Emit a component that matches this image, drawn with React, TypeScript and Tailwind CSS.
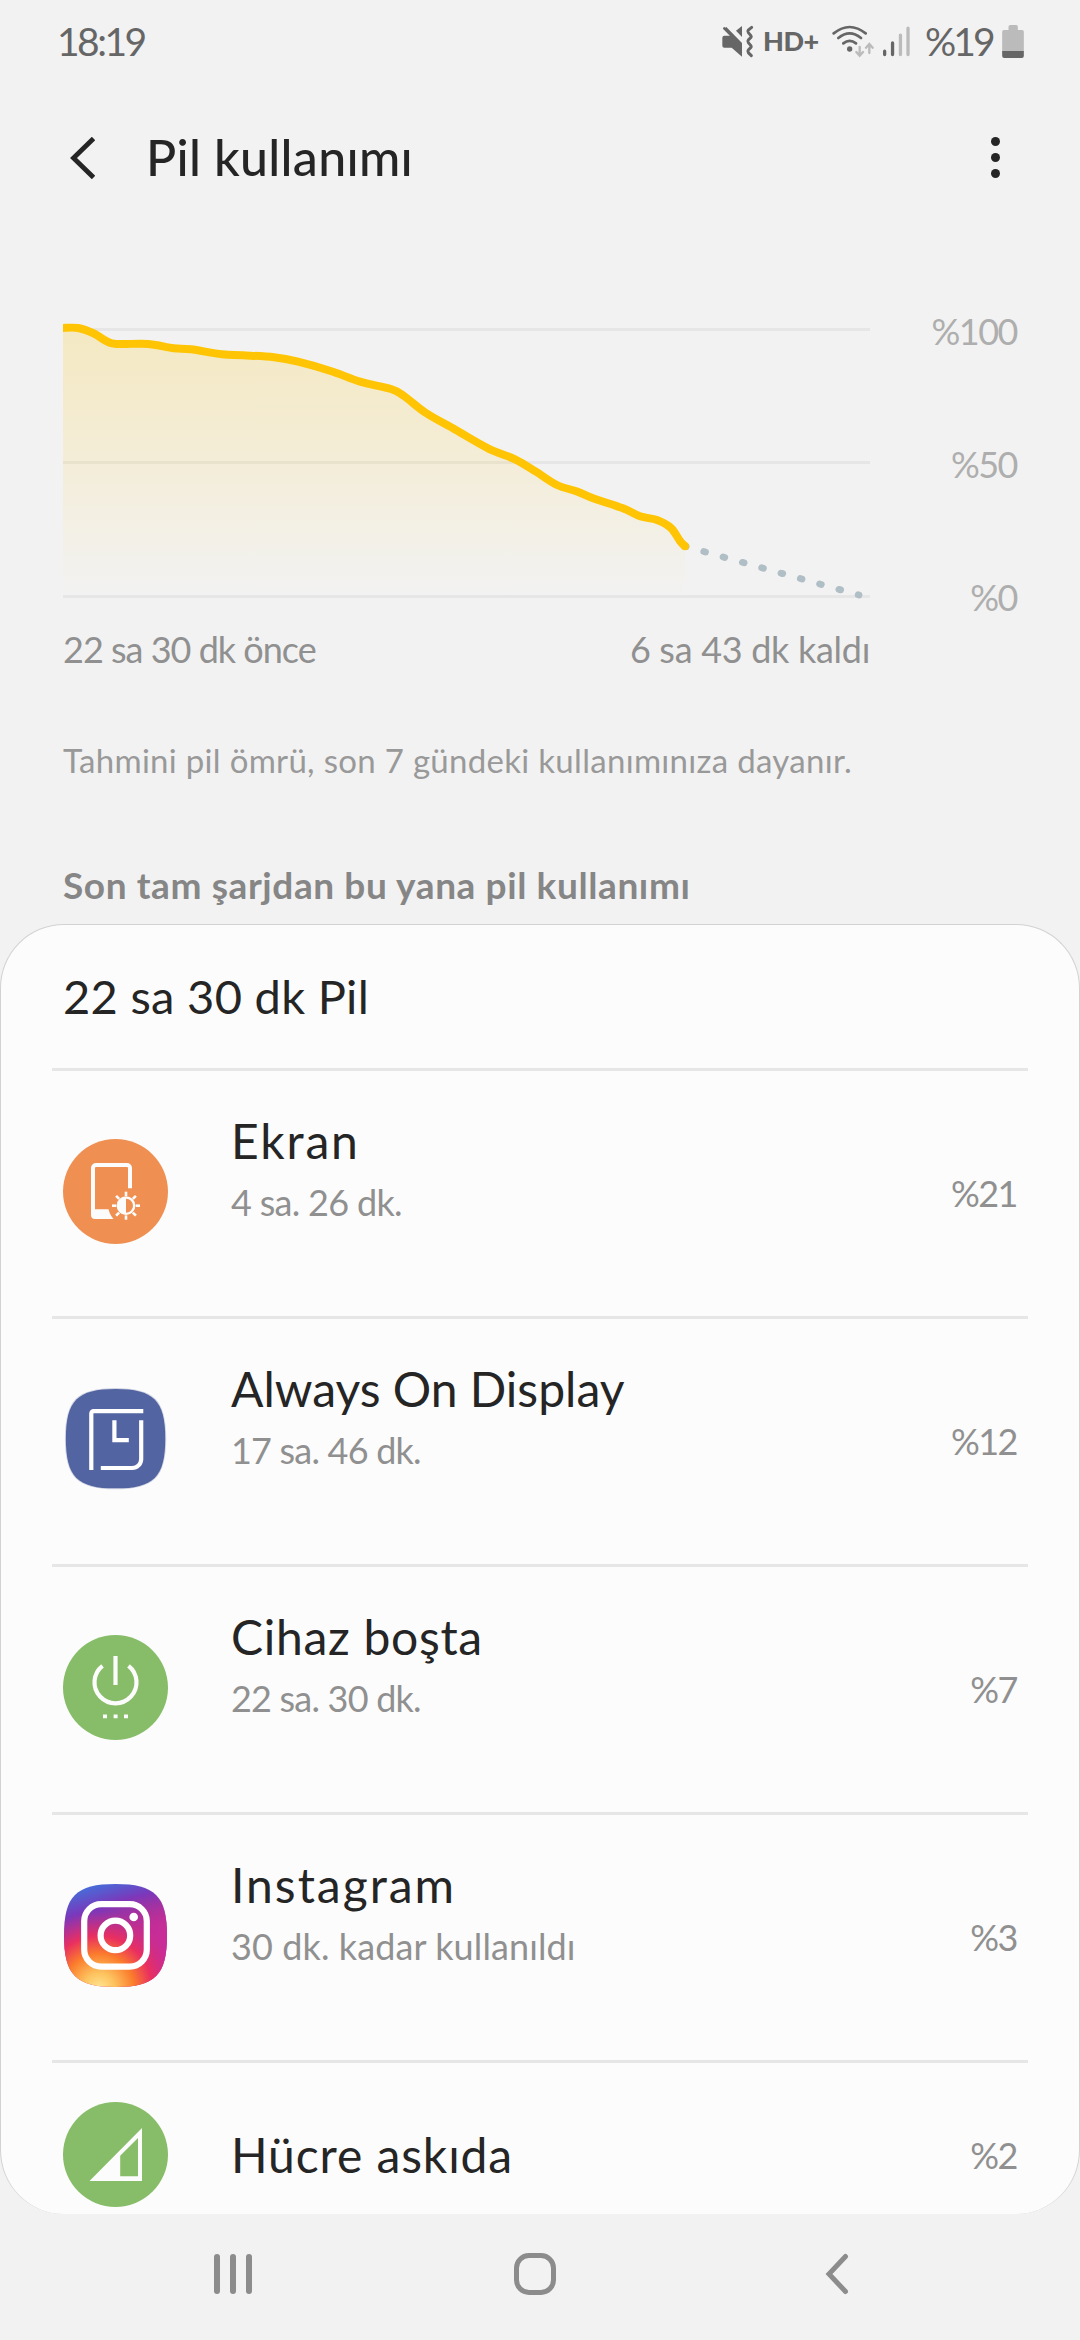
import type { ReactNode } from "react";

type Point = [number, number];

// battery history, in chart units
const history: Point[] = [
  [0, 18], [15, 18], [31, 23.5], [49, 33.3], [77, 33.7], [91, 34.7],
  [111, 38.3], [128, 39.3], [159, 44.3], [180, 45.3], [211, 47.3],
  [235, 51.7], [270, 61.7], [297, 71.7], [328, 79], [341, 86],
  [363, 103], [390, 118.3], [425, 138.3], [452, 149.3], [473, 161.7],
  [494, 175], [514, 181.5], [530, 188.3], [560, 198.3], [577, 206.3],
  [594, 210], [608, 218], [617, 231], [622, 236.3],
];

// catmull-rom spline through the points
function smooth(pts: Point[]) {
  let d = `M${pts[0][0]} ${pts[0][1]}`;
  for (let i = 0; i < pts.length - 1; i++) {
    const p0 = pts[Math.max(i - 1, 0)];
    const p1 = pts[i];
    const p2 = pts[i + 1];
    const p3 = pts[Math.min(i + 2, pts.length - 1)];
    d += `C${p1[0] + (p2[0] - p0[0]) / 6} ${p1[1] + (p2[1] - p0[1]) / 6} ${p2[0] - (p3[0] - p1[0]) / 6} ${p2[1] - (p3[1] - p1[1]) / 6} ${p2[0]} ${p2[1]}`;
  }
  return d;
}

const SQUIRCLE = "M52.5 1C92 1 104 13 104 52.5S92 104 52.5 104 1 92 1 52.5 13 1 52.5 1Z";

function ScreenIcon() {
  const rays = [0, 45, 90, 135, 180, 225, 270, 315];
  return (
    <svg viewBox="0 0 105 105" className="size-[105px]">
      <circle cx="52.5" cy="52.5" r="52.5" fill="#ef9052" />
      <path d="M67 49.3V29a3 3 0 0 0-3-3H33a3 3 0 0 0-3 3v46" fill="none" stroke="#fcfcfc" strokeWidth="4" />
      <path d="M28 70.3h17.5c1 4 2.5 7 5 9.7H32a4 4 0 0 1-4-4Z" fill="#fcfcfc" />
      <circle cx="63" cy="66.7" r="8.2" fill="none" stroke="#fcfcfc" strokeWidth="2.4" />
      <path d="M63 58.5a8.2 8.2 0 0 0 0 16.4Z" fill="#fcfcfc" />
      {rays.map((r) => (
        <path key={r} d="M63 57V52.7" stroke="#fcfcfc" strokeWidth="2.6" transform={`rotate(${r} 63 66.7)`} />
      ))}
    </svg>
  );
}

function AodIcon() {
  return (
    <svg viewBox="0 0 105 105" className="size-[105px]">
      <path d={SQUIRCLE} fill="#5264a1" stroke="#5264a1" strokeOpacity="0.25" strokeWidth="2" transform="translate(1.9 1) scale(.965 .965)" />
      <g fill="none" stroke="#fff" strokeWidth="4.2">
        <path d="M28.3 83V26.5a2.4 2.4 0 0 1 2.4-2.4H80.3" />
        <path d="M78.2 33.3V72a9 9 0 0 1-9 9H37.8" />
        <path d="M51.4 33.3V53.2H65.8" />
      </g>
    </svg>
  );
}

function IdleIcon() {
  return (
    <svg viewBox="0 0 105 105" className="size-[105px]">
      <circle cx="52.5" cy="52.5" r="52.5" fill="#87bd68" />
      <path d="M39.5 30.8a21 21 0 1 0 26 0M52.5 21v29" fill="none" stroke="#fcfcfc" strokeWidth="4.2" />
      <path d="M40 79.6h4v3.6h-4zM50.6 79.6h4v3.6h-4zM61 79.6h4v3.6h-4z" fill="#fcfcfc" />
    </svg>
  );
}

function InstagramIcon() {
  return (
    <svg viewBox="0 0 105 105" className="size-[105px]">
      <defs>
        <linearGradient id="igBase" x1="0.2" y1="0" x2="0.5" y2="1">
          <stop offset="0" stopColor="#3f74dd" />
          <stop offset="0.25" stopColor="#7a38bb" />
          <stop offset="0.55" stopColor="#b0328e" />
          <stop offset="1" stopColor="#e0306a" />
        </linearGradient>
        <linearGradient id="igRight" x1="0" y1="0.5" x2="1" y2="0.4">
          <stop offset="0.35" stopColor="#d02a8c" stopOpacity="0" />
          <stop offset="1" stopColor="#c82c9c" />
        </linearGradient>
        <linearGradient id="igFade" x1="0" y1="0" x2="0" y2="1">
          <stop offset="0.1" stopColor="#fff" stopOpacity="0" />
          <stop offset="0.45" stopColor="#fff" />
        </linearGradient>
        <mask id="igMask">
          <rect width="105" height="105" fill="url(#igFade)" />
        </mask>
        <radialGradient id="igWarm" gradientUnits="userSpaceOnUse" cx="36" cy="106" r="78">
          <stop offset="0" stopColor="#ffe795" />
          <stop offset="0.2" stopColor="#fdc460" />
          <stop offset="0.45" stopColor="#fb7c2c" />
          <stop offset="0.68" stopColor="#e92f60" />
          <stop offset="1" stopColor="#c92c8c" stopOpacity="0" />
        </radialGradient>
      </defs>
      <path d={SQUIRCLE} fill="url(#igBase)" />
      <path d={SQUIRCLE} fill="url(#igRight)" mask="url(#igMask)" />
      <path d={SQUIRCLE} fill="url(#igWarm)" />
      <g fill="none" stroke="#fff" strokeWidth="6.2">
        <rect x="21.2" y="21.2" width="62.6" height="62.4" rx="17" />
        <circle cx="52.4" cy="52.4" r="14.8" />
      </g>
      <circle cx="70.7" cy="34" r="4.3" fill="#fff" />
    </svg>
  );
}

function CellIcon() {
  return (
    <svg viewBox="0 0 105 105" className="size-[105px]">
      <circle cx="52.5" cy="52.5" r="52.5" fill="#87bd68" />
      <path d="M26.5 79H79V26ZM57.2 53.7 75 36v38.3H57.2Z" fill="#fcfcfc" fillRule="evenodd" />
    </svg>
  );
}

type Usage = { name: string; nameClass: string; time: string; timeClass: string; percent: string; icon: ReactNode };

const usages: Usage[] = [
  { name: "Ekran", nameClass: "tracking-[1.8px]", time: "4 sa. 26 dk.", timeClass: "tracking-[-0.7px]", percent: "%21", icon: <ScreenIcon /> },
  { name: "Always On Display", nameClass: "tracking-normal", time: "17 sa. 46 dk.", timeClass: "tracking-[-0.8px]", percent: "%12", icon: <AodIcon /> },
  { name: "Cihaz boşta", nameClass: "tracking-[0.7px]", time: "22 sa. 30 dk.", timeClass: "tracking-[-0.8px]", percent: "%7", icon: <IdleIcon /> },
  { name: "Instagram", nameClass: "tracking-[2px]", time: "30 dk. kadar kullanıldı", timeClass: "tracking-[0.1px]", percent: "%3", icon: <InstagramIcon /> },
];

function StatusBar() {
  return (
    <div className="flex h-[83px] shrink-0 items-center justify-between pl-[57px] pr-14 text-[#666]">
      <span className="text-[39px] tracking-[-2.5px]">18:19</span>

      <div className="flex items-center">
        {/* muted, vibrating */}
        <svg viewBox="126 75 96 99" className="h-[33px] w-8">
          <path d="M133 107h22L137 89a5 5 0 0 1 2-8l47 48v41l-31-27h-22q-6 0-6-6v-24q0-6 6-6ZM168 92l18-14v33Z" fill="#666" />
          <path d="M133 85l20 20" stroke="#666" strokeWidth="8" strokeLinecap="round" />
          <path d="M215 82l-10 8q-3 4 0 8l7 8q3 4 0 7l-7 7q-3 4 0 8l7 8q3 4 0 7l-7 7q-3 4 0 8l9 9" fill="none" stroke="#666" strokeWidth="9" strokeLinecap="round" />
        </svg>
        <span className="ml-[9px] w-[55px] text-[27px] font-black tracking-[-0.5px]">HD+</span>

        <svg viewBox="455 72 126 99" className="ml-[14px] h-[33px] w-[42px]">
          <g fill="none" stroke="#666" strokeWidth="8" strokeLinecap="round">
            <path d="M460 97q48-38 96 0M474 111q34-28 68 0M489 127q19-15 38 0" />
          </g>
          <circle cx="508" cy="144" r="8" fill="#666" />
          <path d="M538 138v24m-10-9 10 11 10-11M567 156v-26m-10 10 10-11 10 11" fill="none" stroke="#bbb" strokeWidth="7" strokeLinecap="round" />
        </svg>

        <svg viewBox="606 78 82 93" className="ml-[9px] h-[31px] w-[27px]">
          <g fill="none" strokeWidth="10" strokeLinecap="round">
            <path d="M611 154v10M635 129v35" stroke="#666" />
            <path d="M659 105v59M682 84v80" stroke="#bbb" />
          </g>
        </svg>

        <span className="ml-[15px] w-[70px] text-[39px] tracking-[-3px]">%19</span>

        <svg viewBox="968 75 65 99" className="ml-[7px] h-[33px] w-[22px]">
          <path d="M987 90V80q0-5 5-5h18q5 0 5 5v10h13q5 0 5 5v60H968V95q0-5 5-5Z" fill="#bbb" />
          <path d="M968 153h65v15q0 6-6 6h-53q-6 0-6-6Z" fill="#666" />
        </svg>
      </div>
    </div>
  );
}

function BatteryChart() {
  const line = smooth(history);
  return (
    <div className="mt-[78px] px-[63px]">
      <div className="flex justify-between">
        <svg viewBox="0 0 807 306" className="h-[306px] w-[807px]">
          <defs>
            <linearGradient id="area" gradientUnits="userSpaceOnUse" x1="0" y1="18" x2="0" y2="286">
              <stop offset="0" stopColor="#ffc505" stopOpacity="0.2" />
              <stop offset="0.4" stopColor="#ffc505" stopOpacity="0.13" />
              <stop offset="1" stopColor="#ffc505" stopOpacity="0" />
            </linearGradient>
          </defs>
          <path d="M0 19.5H807M0 152.5H807M0 286.5H807" stroke="#e6e6e6" strokeWidth="3" />
          <path d={`${line}V286H0Z`} fill="url(#area)" />
          <path d="M622 236.3 L796 285" stroke="#b0bec5" strokeWidth="6.8" strokeLinecap="round" strokeDasharray="1.8 18.25" strokeDashoffset="0.6" />
          <path d={line} fill="none" stroke="#ffc505" strokeWidth="8" />
          <circle cx="622" cy="236.3" r="4" fill="#ffc505" />
        </svg>
        <div className="-mb-px mt-px flex flex-col justify-between text-right text-4xl/10 tracking-[-1.5px] text-[#aeaeae]">
          <span>%100</span>
          <span>%50</span>
          <span>%0</span>
        </div>
      </div>
      <div className="mt-[13px] flex w-[807px] justify-between text-4xl/10 text-[#909090]">
        <span className="tracking-[-1px]">22 sa 30 dk önce</span>
        <span className="tracking-[-0.3px]">6 sa 43 dk kaldı</span>
      </div>
    </div>
  );
}

function UsageRow({ item }: { item: Usage }) {
  return (
    <div className="mx-[51px] flex h-[248px] shrink-0 items-start border-t-[3px] border-[#e6e6e6] px-[11px]">
      <div className="mt-[68px]">{item.icon}</div>
      <div className="ml-[63px] mt-11 flex flex-1 flex-col gap-[15px] whitespace-nowrap">
        <span className={`text-5xl/[52px] text-[#252525] ${item.nameClass}`}>{item.name}</span>
        <span className={`text-4xl/10 text-[#909090] ${item.timeClass}`}>{item.time}</span>
      </div>
      <span className="mt-[102px] text-4xl/10 tracking-[-1.5px] text-[#909090]">{item.percent}</span>
    </div>
  );
}

export default function App() {
  return (
    <div className="flex h-[2340px] w-[1080px] flex-col overflow-hidden bg-[#f2f2f2] font-['Lato','Noto_Sans',sans-serif]">
      <StatusBar />

      {/* HEADER */}
      <header className="flex h-[149px] shrink-0 items-center pl-[69px] pr-[80px]">
        <svg viewBox="0 0 26 42" className="h-[42px] w-[26px]">
          <path d="M24.5 1.5 4.5 21l20 19.5" fill="none" stroke="#252525" strokeWidth="4.8" />
        </svg>
        <h1 className="ml-[51px] flex-1 text-[50px] font-medium tracking-[0.3px] text-[#252525]">Pil kullanımı</h1>
        <div className="flex flex-col gap-[7px]">
          <i className="size-[9px] rounded-full bg-[#252525]" />
          <i className="size-[9px] rounded-full bg-[#252525]" />
          <i className="size-[9px] rounded-full bg-[#252525]" />
        </div>
      </header>

      <BatteryChart />

      <p className="mt-[71px] whitespace-nowrap px-[63px] text-[33px]/10 tracking-[0.3px] text-[#999]">
        Tahmini pil ömrü, son 7 gündeki kullanımınıza dayanır.
      </p>
      <h2 className="mt-[85px] whitespace-nowrap px-[63px] text-[37px]/10 font-bold tracking-[0.6px] text-[#868686]">
        Son tam şarjdan bu yana pil kullanımı
      </h2>

      {/* USAGE LIST */}
      <main className="mt-[19px] flex h-[1290px] shrink-0 flex-col overflow-hidden rounded-[64px] border-x border-t border-[#d2d2d2] bg-[#fcfcfc]">
        <div className="flex h-[143px] shrink-0 items-center px-[62px] text-[47px] tracking-[0.3px] text-[#252525]">
          22 sa 30 dk Pil
        </div>
        {usages.map((item) => (
          <UsageRow key={item.name} item={item} />
        ))}
        <div className="mx-[51px] flex h-[186px] shrink-0 items-center border-t-[3px] border-[#e6e6e6] px-[11px]">
          <CellIcon />
          <span className="ml-[63px] flex-1 text-5xl tracking-[0.9px] text-[#252525]">Hücre askıda</span>
          <span className="text-4xl tracking-[-1.5px] text-[#909090]">%2</span>
        </div>
      </main>

      {/* NAVIGATION */}
      <nav className="flex h-[120px] shrink-0 items-center pl-[214px]">
        <div className="flex gap-[10px]">
          <i className="h-10 w-[6px] rounded-full bg-[#8c8c8c]" />
          <i className="h-10 w-[6px] rounded-full bg-[#8c8c8c]" />
          <i className="h-10 w-[6px] rounded-full bg-[#8c8c8c]" />
        </div>
        <i className="ml-[262px] size-[42px] rounded-[15px] border-[5px] border-[#8c8c8c]" />
        <svg viewBox="0 0 24 42" className="ml-[269px] h-[42px] w-6">
          <path d="M20.5 3.5 4 21l16.5 17.5" fill="none" stroke="#8c8c8c" strokeWidth="5" strokeLinecap="round" />
        </svg>
      </nav>
    </div>
  );
}
